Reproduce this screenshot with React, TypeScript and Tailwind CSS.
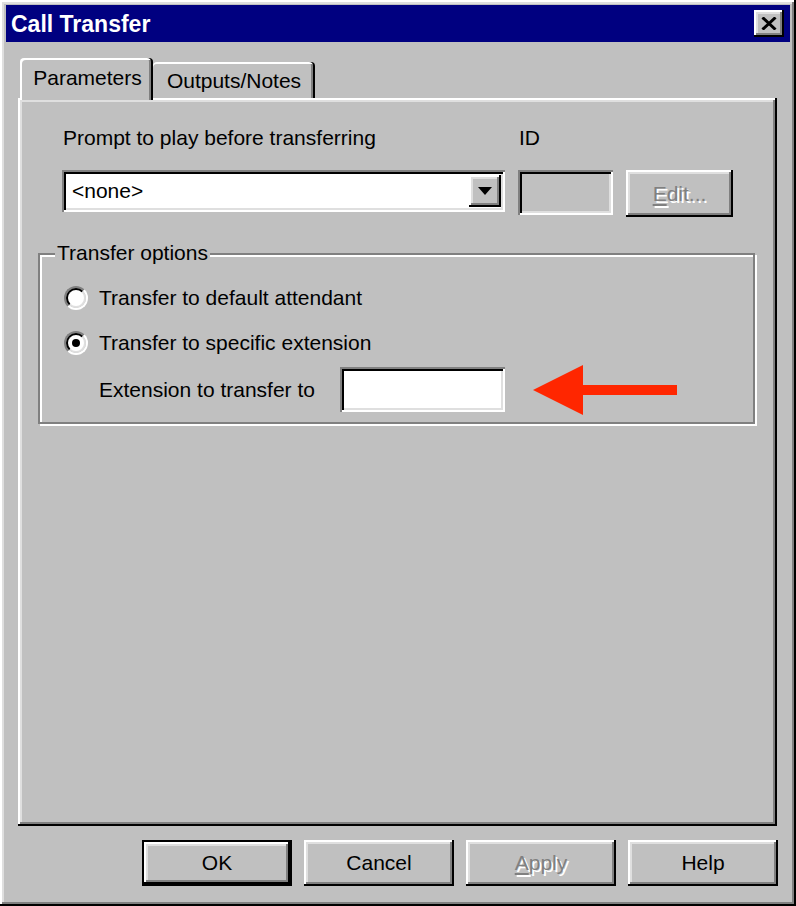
const raised =
  'shadow-[inset_-2px_-2px_0_#000,inset_2px_2px_0_#fff,inset_-4px_-4px_0_#808080,inset_4px_4px_0_#dfdfdf]';
const sunken =
  'shadow-[inset_2px_2px_0_#808080,inset_-2px_-2px_0_#fff,inset_4px_4px_0_#000,inset_-4px_-4px_0_#dfdfdf]';

const Radio = ({ checked }: { checked?: boolean }) => (
  <div className="w-[24px] h-[24px] rounded-full border-2 border-t-[#808080] border-l-[#808080] border-b-white border-r-white">
    <div className="w-full h-full rounded-full border-2 border-t-black border-l-black border-b-[#dfdfdf] border-r-[#dfdfdf] bg-white flex items-center justify-center">
      {checked && <div className="w-[8px] h-[8px] rounded-full bg-black" />}
    </div>
  </div>
);

const Button = ({
  label,
  disabled,
  isDefault,
  mnemonic,
}: {
  label: string;
  disabled?: boolean;
  isDefault?: boolean;
  mnemonic?: boolean;
}) => {
  const text = (
    <span
      className={
        disabled
          ? 'text-[#808080] [text-shadow:2px_2px_0_#fff]'
          : 'text-black'
      }
    >
      {mnemonic ? (
        <>
          <span className="underline underline-offset-[3px] decoration-2">
            {label[0]}
          </span>
          {label.slice(1)}
        </>
      ) : (
        label
      )}
    </span>
  );

  if (isDefault) {
    return (
      <div className="w-[150px] h-[46px] border-2 border-black">
        <div className={`w-full h-full flex items-center justify-center ${raised}`}>
          {text}
        </div>
      </div>
    );
  }

  return (
    <div className={`w-[150px] h-[46px] flex items-center justify-center ${raised}`}>
      {text}
    </div>
  );
};

export default function App() {
  return (
    <div
      className={`w-[796px] h-[906px] bg-[#c0c0c0] pt-[5px] px-[6px] font-['Liberation_Sans',Arial,sans-serif] text-[21px] leading-[24px] text-black ${raised}`}
    >
      {/* title bar */}
      <div className="h-[37px] bg-[#000080] flex items-center justify-between pl-[5px] pr-[6px]">
        <span className="text-white font-bold text-[23px]">Call Transfer</span>
        <div className={`w-[30px] h-[27px] bg-[#c0c0c0] flex items-center justify-center ${raised}`}>
          <svg width="16" height="13" viewBox="0 0 16 13">
            <path d="M1.5 0.5 L14.5 12.5 M14.5 0.5 L1.5 12.5" stroke="#000" strokeWidth="3" />
          </svg>
        </div>
      </div>

      {/* tabs */}
      <div className="ml-[12px] mt-[16px] w-[759px]">
        <div className="flex items-end pl-[2px] h-[40px]">
          <div className="relative z-10 w-[133px] h-[42px] -mb-[2px] bg-[#c0c0c0] rounded-t-[4px] pt-[8px] pl-[2px] text-center shadow-[inset_-2px_0_0_#000,inset_2px_2px_0_#fff,inset_-4px_0_0_#808080]">
            Parameters
          </div>
          <div className="w-[162px] h-[36px] rounded-t-[4px] pt-[7px] text-center shadow-[inset_-2px_0_0_#000,inset_0_2px_0_#fff,inset_-4px_0_0_#808080]">
            Outputs/Notes
          </div>
        </div>

        {/* panel */}
        <div className={`h-[728px] px-[20px] pt-[28px] ${raised}`}>
          <div className="flex pl-[25px]">
            <div className="w-[456px]">Prompt to play before transferring</div>
            <div>ID</div>
          </div>

          <div className="flex items-start pl-[24px] mt-[20px]">
            <div className={`w-[443px] h-[42px] bg-white flex items-center justify-between pl-[10px] pr-[4px] ${sunken}`}>
              <span>&lt;none&gt;</span>
              <div className={`w-[32px] h-[32px] bg-[#c0c0c0] flex items-center justify-center ${raised}`}>
                <svg width="16" height="8" viewBox="0 0 16 8">
                  <polygon points="1,0 15,0 8,8" fill="#000" />
                </svg>
              </div>
            </div>
            <div className={`ml-[13px] w-[95px] h-[45px] ${sunken}`} />
            <div className="ml-[13px]">
              <div className={`w-[107px] h-[47px] flex items-center justify-center ${raised}`}>
                <span className="text-[#808080] [text-shadow:2px_2px_0_#fff]">
                  <span className="underline underline-offset-[3px] decoration-2">E</span>
                  dit...
                </span>
              </div>
            </div>
          </div>

          {/* group box */}
          <div className="relative mt-[36px] w-[717px] border-2 border-[#808080] shadow-[inset_2px_2px_0_#fff,2px_2px_0_#fff] pl-[24px] pt-[28px] pb-[10px]">
            <span className="absolute -top-[14px] left-[15px] px-[2px] bg-[#c0c0c0]">
              Transfer options
            </span>
            <div className="flex items-center h-[30px] gap-[11px]">
              <Radio />
              <span>Transfer to default attendant</span>
            </div>
            <div className="flex items-center h-[30px] gap-[11px] mt-[15px]">
              <Radio checked />
              <span>Transfer to specific extension</span>
            </div>
            <div className="flex items-center h-[45px] mt-[9px] pl-[35px]">
              <span className="w-[241px]">Extension to transfer to</span>
              <div className={`w-[165px] h-[45px] bg-white ${sunken}`} />
              <svg className="ml-[28px]" width="144" height="50" viewBox="0 0 144 50">
                <polygon points="0,25 50,0 50,50" fill="#ff2600" />
                <rect x="49" y="20" width="95" height="10" fill="#ff2600" />
              </svg>
            </div>
          </div>
        </div>

        {/* buttons */}
        <div className="flex justify-end gap-[12px] mt-[14px] -mr-[1px]">
          <Button label="OK" isDefault />
          <Button label="Cancel" />
          <Button label="Apply" disabled mnemonic />
          <Button label="Help" />
        </div>
      </div>
    </div>
  );
}
